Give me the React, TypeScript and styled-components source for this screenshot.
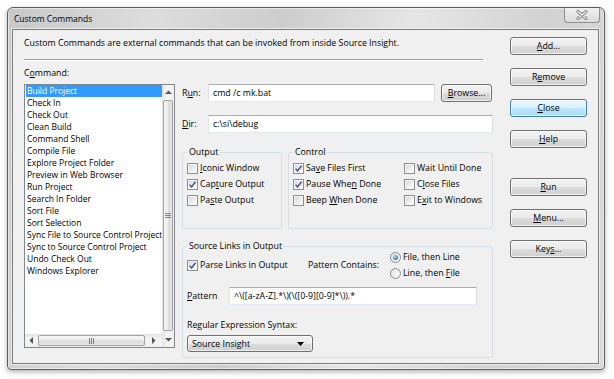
import React from 'react'
import styled, { createGlobalStyle, css } from 'styled-components'

const GlobalStyle = createGlobalStyle`
  html, body {
    margin: 0;
    padding: 0;
    background: #ffffff;
  }

  body {
    font-family: 'Open Sans', 'Noto Sans', sans-serif;
    font-size: 8.8px;
    color: #000000;
  }

  * {
    box-sizing: border-box;
  }
`

const Stage = styled.div`
  width: 614px;
  height: 379px;
  padding: 7px 0 0 7px;
`

const Window = styled.div`
  display: flex;
  flex-direction: column;

  width: 598px;
  height: 363px;

  border: 1px solid #5e5e5e;
  border-radius: 6px 6px 4px 4px;

  background: linear-gradient(100deg, #c8c8c8 0%, #dddddd 22%, #cdcdcd 42%, #e6e6e6 62%, #d2d2d2 82%, #dadada 100%);
  box-shadow: 0 2px 5px rgba(0, 0, 0, 0.3), inset 0 0 0 1px rgba(255, 255, 255, 0.5);
`

const TitleBar = styled.div`
  display: flex;
  justify-content: space-between;
  align-items: flex-start;

  height: 21px;
  padding: 0 4px 0 6px;
`

const Title = styled.span`
  line-height: 21px;
  font-size: 8.5px;
`

const CaptionClose = styled.div`
  display: flex;
  justify-content: center;
  align-items: center;

  width: 36px;
  height: 15px;

  border: 1px solid #8f8f8f;
  border-top: none;
  border-radius: 0 0 4px 4px;

  background: linear-gradient(#f0f0f0, #dcdcdc);
`

const Client = styled.div`
  display: flex;
  flex: 1;

  margin: 0 5px 5px 4px;

  border: 1px solid #7c7c7c;
  background: #f0f0f0;
  box-shadow: 0 0 0 1px rgba(255, 255, 255, 0.55);
`

const Main = styled.div`
  display: flex;
  flex-direction: column;

  width: 480px;
  padding: 7px 0 0 11px;
`

const Description = styled.div`
  line-height: 13px;
  white-space: nowrap;
`

const Separator = styled.div`
  width: 459px;
  height: 2px;
  margin-top: 9px;

  border-top: 1px solid #a0a0a0;
  border-bottom: 1px solid #ffffff;
`

const Body = styled.div`
  display: flex;
  margin-top: 6px;
`

const LeftCol = styled.div`
  display: flex;
  flex-direction: column;
  width: 151px;
`

const Label = styled.span<{ $w?: number }>`
  flex: none;
  width: ${(p) => (p.$w ? `${p.$w}px` : 'auto')};
  line-height: 12px;
  white-space: nowrap;
`

const Key = styled.span`
  text-decoration: underline;
  text-underline-offset: 1px;
`

const ListBox = styled.div`
  display: grid;
  grid-template-columns: 1fr 12px;
  grid-template-rows: 1fr 13px;

  height: 264px;
  margin-top: 5px;

  border: 1px solid #828790;
  background: #ffffff;
`

const Items = styled.ul`
  margin: 0;
  padding: 0;

  overflow: hidden;

  list-style: none;
  font-size: 8.5px;
`

const Item = styled.li<{ $selected?: boolean }>`
  height: 12px;
  padding-left: 2px;

  line-height: 12px;
  white-space: nowrap;

  ${(p) =>
    p.$selected &&
    css`
      margin-left: 1px;
      padding-left: 1px;
      background: #3399ff;
      color: #ffffff;
    `}
`

const VScroll = styled.div`
  display: flex;
  flex-direction: column;

  grid-row: 1 / 3;
  grid-column: 2;

  background: linear-gradient(to right, #e4e4e4, #f4f4f4 40%, #f0f0f0);
`

const HScroll = styled.div`
  display: flex;

  grid-row: 2;
  grid-column: 1;

  background: linear-gradient(#e4e4e4, #f4f4f4 40%, #f0f0f0);
`

const ArrowCell = styled.div<{ $size: number; $vertical?: boolean }>`
  display: flex;
  justify-content: center;
  align-items: center;
  flex: none;

  ${(p) => (p.$vertical ? `height: ${p.$size}px;` : `width: ${p.$size}px;`)}
`

const Thumb = styled.div<{ $vertical?: boolean }>`
  display: flex;
  justify-content: center;
  align-items: center;
  flex: 1;

  margin: ${(p) => (p.$vertical ? '1px 1px 2px 1px' : '1px 1px 1px 1px')};

  border: 1px solid #a2a2a2;
  border-radius: 2px;

  background: ${(p) =>
    p.$vertical
      ? 'linear-gradient(to right, #f7f7f7, #ececec 45%, #dcdcdc 55%, #e6e6e6)'
      : 'linear-gradient(#f7f7f7, #ececec 45%, #dcdcdc 55%, #e6e6e6)'};
`

const Form = styled.div`
  display: flex;
  flex-direction: column;

  width: 311px;
  margin-left: 7px;
  padding-top: 17px;
`

const FieldRow = styled.div<{ $mt?: number }>`
  display: flex;
  align-items: center;

  height: 18px;
  margin-top: ${(p) => p.$mt ?? 0}px;
`

const TextBox = styled.input<{ $w?: number }>`
  flex: ${(p) => (p.$w ? 'none' : '1')};
  width: ${(p) => (p.$w ? `${p.$w}px` : 'auto')};
  min-width: 0;
  height: 18px;
  padding: 0 4px;

  border: 1px solid;
  border-color: #abadb3 #dbdfe6 #e3e9ef #e2e3ea;
  outline: none;

  font: inherit;
  color: #000000;
  background: #ffffff;
`

const Button = styled.button<{ $w?: number; $primary?: boolean; $mt?: number }>`
  flex: none;
  width: ${(p) => p.$w ?? 77}px;
  height: 18px;
  margin: ${(p) => p.$mt ?? 0}px 0 0 0;
  padding: 0;

  border: 1px solid ${(p) => (p.$primary ? '#3c7fb1' : '#707070')};
  border-radius: 3px;

  font: inherit;
  color: #000000;

  background: ${(p) =>
    p.$primary
      ? 'linear-gradient(#eaf6fd, #d9f0fc 50%, #bee6fd 50%, #a7d9f5)'
      : 'linear-gradient(#f2f2f2, #ebebeb 50%, #dddddd 50%, #cfcfcf)'};
  box-shadow: inset 0 0 0 1px rgba(255, 255, 255, 0.7);
`

const GroupsRow = styled.div`
  display: flex;
  gap: 6px;
  margin-top: 13px;
`

const Group = styled.fieldset<{ $w: number; $h: number; $mt?: number }>`
  display: flex;
  flex-direction: column;

  width: ${(p) => p.$w}px;
  height: ${(p) => p.$h}px;
  min-width: 0;
  margin: ${(p) => p.$mt ?? 0}px 0 0 0;
  padding: 2px 4px 0 4px;

  border: 1px solid #d5dfe5;
  border-radius: 3px;
`

const Legend = styled.legend`
  padding: 0 2px;
  line-height: 12px;
`

const ControlGrid = styled.div`
  display: grid;
  grid-template-columns: 111px auto;
  grid-template-rows: repeat(3, 16px);
  grid-auto-flow: column;
`

const CheckRow = styled.div`
  display: flex;
  align-items: center;

  height: 16px;
  white-space: nowrap;
`

const Box = styled.span`
  display: flex;
  justify-content: center;
  align-items: center;
  flex: none;

  width: 11px;
  height: 11px;
  margin-right: 2px;

  border: 1px solid #8e8f8f;
  background: linear-gradient(135deg, #cfd2d6 0%, #eeeeee 55%, #fbfbfb 100%);
  box-shadow: inset 0 0 0 1px #f6f6f6;
`

const Dot = styled.span<{ $on?: boolean }>`
  display: flex;
  justify-content: center;
  align-items: center;
  flex: none;

  width: 11px;
  height: 11px;
  margin-right: 2px;

  border: 1px solid #8e8f8f;
  border-radius: 50%;
  background: radial-gradient(circle at 65% 65%, #fbfbfb, #dcdcdc);

  &::after {
    content: '';
    display: ${(p) => (p.$on ? 'block' : 'none')};
    width: 5px;
    height: 5px;
    border-radius: 50%;
    background: radial-gradient(circle at 40% 35%, #b7e6ff, #2c7bd0 65%, #1b4f99);
  }
`

const LinksTop = styled.div`
  display: flex;
  align-items: center;

  height: 32px;
  margin-top: -5px;
`

const Cell = styled.div<{ $w: number }>`
  flex: none;
  width: ${(p) => p.$w}px;
`

const RadioStack = styled.div`
  display: flex;
  flex-direction: column;
`

const SyntaxLabel = styled(Label)`
  margin-top: 14px;
`

const Select = styled.div`
  display: flex;
  justify-content: space-between;
  align-items: center;

  width: 126px;
  height: 17px;
  margin-top: 4px;
  padding: 0 8px 0 4px;

  border: 1px solid #707070;
  border-radius: 3px;

  background: linear-gradient(#f2f2f2, #ebebeb 50%, #dddddd 50%, #cfcfcf);
  box-shadow: inset 0 0 0 1px rgba(255, 255, 255, 0.7);
`

const ButtonCol = styled.div`
  display: flex;
  flex-direction: column;
  gap: 13px;

  width: 77px;
  margin-left: 17px;
  padding-top: 7px;
`

const commands = [
  'Build Project',
  'Check In',
  'Check Out',
  'Clean Build',
  'Command Shell',
  'Compile File',
  'Explore Project Folder',
  'Preview in Web Browser',
  'Run Project',
  'Search In Folder',
  'Sort File',
  'Sort Selection',
  'Sync File to Source Control Project',
  'Sync to Source Control Project',
  'Undo Check Out',
  'Windows Explorer',
]

const Arrow = ({ dir }: { dir: 'up' | 'down' | 'left' | 'right' }) => {
  const points = {
    up: '0,4 3.5,0.5 7,4',
    down: '0,0 7,0 3.5,3.5',
    left: '4,0 4,7 0.5,3.5',
    right: '0,0 0,7 3.5,3.5',
  }[dir]
  const vertical = dir === 'up' || dir === 'down'
  return (
    <svg width={vertical ? 7 : 4} height={vertical ? 4 : 7} viewBox={vertical ? '0 0 7 4' : '0 0 4 7'}>
      <polygon points={points} fill="#555555" />
    </svg>
  )
}

const Grip = ({ vertical }: { vertical?: boolean }) => (
  <svg width={vertical ? 6 : 5} height={vertical ? 5 : 6} viewBox={vertical ? '0 0 6 5' : '0 0 5 6'}>
    {[0, 2, 4].map((o) =>
      vertical ? (
        <rect key={o} x={0} y={o} width={6} height={1} fill="#7f7f7f" />
      ) : (
        <rect key={o} x={o} y={0} width={1} height={6} fill="#7f7f7f" />
      )
    )}
  </svg>
)

const Check = ({ checked, children }: { checked?: boolean; children: React.ReactNode }) => (
  <CheckRow>
    <Box>
      {checked && (
        <svg width="9" height="9" viewBox="0 0 9 9">
          <path d="M1.6 4.6 L3.6 6.9 L7.6 1.8" stroke="#34508f" strokeWidth="1.4" fill="none" />
        </svg>
      )}
    </Box>
    <span>{children}</span>
  </CheckRow>
)

const Radio = ({ on, children }: { on?: boolean; children: React.ReactNode }) => (
  <CheckRow>
    <Dot $on={on} />
    <span>{children}</span>
  </CheckRow>
)

export default function App() {
  return (
    <Stage>
      <GlobalStyle />
      <Window>
        <TitleBar>
          <Title>Custom Commands</Title>
          <CaptionClose>
            <svg width="12" height="10" viewBox="0 0 12 10">
              <path d="M2 1.5 L10 8.5 M10 1.5 L2 8.5" stroke="#7d7d7d" strokeWidth="3" strokeLinecap="round" />
              <path d="M2 1.5 L10 8.5 M10 1.5 L2 8.5" stroke="#f4f4f4" strokeWidth="1.3" strokeLinecap="round" />
            </svg>
          </CaptionClose>
        </TitleBar>
        <Client>
          <Main>
            <Description>
              Custom Commands are external commands that can be invoked from inside Source Insight.
            </Description>
            <Separator />
            <Body>
              <LeftCol>
                <Label>
                  C<Key>o</Key>mmand:
                </Label>
                <ListBox>
                  <Items>
                    {commands.map((name, index) => (
                      <Item key={name} $selected={index === 0}>
                        {name}
                      </Item>
                    ))}
                  </Items>
                  <VScroll>
                    <ArrowCell $size={14} $vertical>
                      <Arrow dir="up" />
                    </ArrowCell>
                    <Thumb $vertical>
                      <Grip vertical />
                    </Thumb>
                    <ArrowCell $size={14} $vertical>
                      <Arrow dir="down" />
                    </ArrowCell>
                  </VScroll>
                  <HScroll>
                    <ArrowCell $size={12}>
                      <Arrow dir="left" />
                    </ArrowCell>
                    <Thumb>
                      <Grip />
                    </Thumb>
                    <ArrowCell $size={16}>
                      <Arrow dir="right" />
                    </ArrowCell>
                  </HScroll>
                </ListBox>
              </LeftCol>

              <Form>
                <FieldRow>
                  <Label $w={26}>
                    R<Key>u</Key>n:
                  </Label>
                  <TextBox $w={227} defaultValue="cmd /c mk.bat" readOnly />
                  <Button $w={51} style={{ marginLeft: 6 }}>
                    <Key>B</Key>rowse...
                  </Button>
                </FieldRow>
                <FieldRow $mt={13}>
                  <Label $w={26}>
                    <Key>D</Key>ir:
                  </Label>
                  <TextBox defaultValue="c:\si\debug" readOnly />
                </FieldRow>

                <GroupsRow>
                  <Group $w={100} $h={83}>
                    <Legend>Output</Legend>
                    <Check>
                      <Key>I</Key>conic Window
                    </Check>
                    <Check checked>
                      Cap<Key>t</Key>ure Output
                    </Check>
                    <Check>
                      Pa<Key>s</Key>te Output
                    </Check>
                  </Group>
                  <Group $w={205} $h={83}>
                    <Legend>Control</Legend>
                    <ControlGrid>
                      <Check checked>
                        Sa<Key>v</Key>e Files First
                      </Check>
                      <Check checked>
                        Pause Whe<Key>n</Key> Done
                      </Check>
                      <Check>
                        Beep <Key>W</Key>hen Done
                      </Check>
                      <Check>Wait Until Done</Check>
                      <Check>
                        C<Key>l</Key>ose Files
                      </Check>
                      <Check>
                        E<Key>x</Key>it to Windows
                      </Check>
                    </ControlGrid>
                  </Group>
                </GroupsRow>

                <Group $w={311} $h={118} $mt={11}>
                  <Legend>Source Links in Output</Legend>
                  <LinksTop>
                    <Cell $w={121}>
                      <Check checked>Parse Links in Output</Check>
                    </Cell>
                    <Cell $w={82}>
                      <Label>Pattern Contains:</Label>
                    </Cell>
                    <RadioStack>
                      <Radio on>File, then Line</Radio>
                      <Radio>
                        Line, then <Key>F</Key>ile
                      </Radio>
                    </RadioStack>
                  </LinksTop>
                  <FieldRow $mt={6}>
                    <Label $w={42}>
                      <Key>P</Key>attern
                    </Label>
                    <TextBox $w={248} defaultValue="^\([a-zA-Z].*\)(\([0-9][0-9]*\)).*" readOnly />
                  </FieldRow>
                  <SyntaxLabel>Regular Expression Syntax:</SyntaxLabel>
                  <Select>
                    <span>Source Insight</span>
                    <svg width="7" height="4" viewBox="0 0 7 4">
                      <polygon points="0,0 7,0 3.5,4" fill="#000000" />
                    </svg>
                  </Select>
                </Group>
              </Form>
            </Body>
          </Main>

          <ButtonCol>
            <Button>
              <Key>A</Key>dd...
            </Button>
            <Button>
              R<Key>e</Key>move
            </Button>
            <Button $primary>
              <Key>C</Key>lose
            </Button>
            <Button>
              <Key>H</Key>elp
            </Button>
            <Button $mt={17}>
              <Key>R</Key>un
            </Button>
            <Button>
              <Key>M</Key>enu...
            </Button>
            <Button>
              Key<Key>s</Key>...
            </Button>
          </ButtonCol>
        </Client>
      </Window>
    </Stage>
  )
}
